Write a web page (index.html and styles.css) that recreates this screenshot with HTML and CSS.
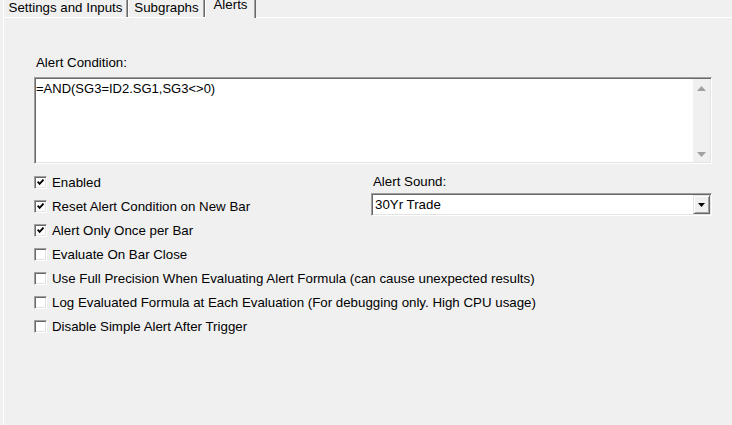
FILE: index.html
```html
<!DOCTYPE html>
<html lang="en">
<head>
	<meta charset="utf-8">
	<title>Alerts</title>
	<link rel="stylesheet" href="styles.css">
</head>
<body>
	<div class="tabs">
		<div class="tab tab-settings">Settings and Inputs</div>
		<div class="tab tab-subgraphs">Subgraphs</div>
		<div class="tab tab-alerts tab-selected">Alerts</div>
	</div>
	<div class="panel">
		<div class="field-label">Alert Condition:</div>
		<div class="memo">
			<div class="memo-text">=AND(SG3=ID2.SG1,SG3&lt;&gt;0)</div>
			<div class="memo-scroll">
				<svg class="arrow" width="9" height="5" viewBox="0 0 9 5"><polygon points="0,5 9,5 4.5,0"></polygon></svg>
				<svg class="arrow" width="9" height="5" viewBox="0 0 9 5"><polygon points="0,0 9,0 4.5,5"></polygon></svg>
			</div>
		</div>
		<div class="options">
			<div class="check">
				<span class="check-box"><svg width="7" height="7" viewBox="0 0 7 7"><path d="M0.6 2.6 L2.6 4.8 L6.5 0.6"></path></svg></span>
				<span>Enabled</span>
			</div>
			<div class="check">
				<span class="check-box"><svg width="7" height="7" viewBox="0 0 7 7"><path d="M0.6 2.6 L2.6 4.8 L6.5 0.6"></path></svg></span>
				<span>Reset Alert Condition on New Bar</span>
			</div>
			<div class="check">
				<span class="check-box"><svg width="7" height="7" viewBox="0 0 7 7"><path d="M0.6 2.6 L2.6 4.8 L6.5 0.6"></path></svg></span>
				<span>Alert Only Once per Bar</span>
			</div>
			<div class="check">
				<span class="check-box"></span>
				<span>Evaluate On Bar Close</span>
			</div>
			<div class="check">
				<span class="check-box"></span>
				<span>Use Full Precision When Evaluating Alert Formula (can cause unexpected results)</span>
			</div>
			<div class="check">
				<span class="check-box"></span>
				<span>Log Evaluated Formula at Each Evaluation (For debugging only. High CPU usage)</span>
			</div>
			<div class="check">
				<span class="check-box"></span>
				<span>Disable Simple Alert After Trigger</span>
			</div>
			<div class="sound">
				<div class="sound-label">Alert Sound:</div>
				<div class="combo">
					<div class="combo-text">30Yr Trade</div>
					<div class="combo-button">
						<svg width="7" height="4" viewBox="0 0 7 4"><polygon points="0,0 7,0 3.5,4"></polygon></svg>
					</div>
				</div>
			</div>
		</div>
	</div>
</body>
</html>
```

FILE: styles.css
```css
html, body {
	margin: 0;
	height: 100%;
	overflow: hidden;
}
body {
	background: #f0f0f0;
	font-family: "Liberation Sans", Arial, sans-serif;
	font-size: 13.3px;
	color: #000;
}
.tabs {
	display: flex;
	align-items: flex-end;
	height: 17px;
	padding-left: 3px;
}
.tab {
	box-sizing: border-box;
	height: 17px;
	border-left: 1px solid #fff;
	border-right: 1px solid #696969;
	box-shadow: inset -1px 0 #a0a0a0;
	text-align: center;
	line-height: 15px;
	white-space: nowrap;
}
.tab-settings {
	width: 125px;
}
.tab-subgraphs {
	width: 77px;
}
.tab-alerts {
	width: 51px;
}
.tab-selected {
	position: relative;
	z-index: 1;
	height: 20px;
	margin-bottom: -1px;
	background: #f0f0f0;
	line-height: 14px;
}
.panel {
	box-sizing: border-box;
	height: 408px;
	margin-left: 3px;
	border-left: 1px solid #fff;
	border-top: 1px solid #fff;
	padding: 37px 0 0 30px;
}
.field-label {
	line-height: 15px;
	padding-left: 2px;
}
.memo {
	box-sizing: border-box;
	display: flex;
	width: 678px;
	height: 87px;
	margin-top: 7px;
	background: #fff;
	border: 1px solid;
	border-color: #a0a0a0 #fff #fff #a0a0a0;
	box-shadow: inset 1px 1px #696969, inset -1px -1px #e3e3e3;
}
.memo-text {
	flex: 1;
	padding: 3px 0 0 1px;
	font-size: 13px;
	line-height: 15px;
}
.memo-scroll {
	display: flex;
	flex-direction: column;
	justify-content: space-between;
	align-items: center;
	width: 17px;
	margin: 1px 1px 1px 0;
	padding: 7px 0 5px;
	box-sizing: border-box;
	background: #f0f0f0;
}
.arrow polygon {
	fill: #a0a0a0;
}
.options {
	display: grid;
	grid-template-columns: 337px 341px;
	grid-auto-rows: 24px;
	margin-top: 6px;
}
.check {
	grid-column: 1;
	display: flex;
	align-items: center;
	gap: 5px;
	white-space: nowrap;
}
.check-box {
	box-sizing: border-box;
	display: flex;
	flex-shrink: 0;
	align-items: center;
	justify-content: center;
	width: 13px;
	height: 13px;
	background: #fff;
	border: 1px solid;
	border-color: #a0a0a0 #fff #fff #a0a0a0;
	box-shadow: inset 1px 1px #696969, inset -1px -1px #e3e3e3;
}
.check-box path {
	fill: none;
	stroke: #000;
	stroke-width: 1.8;
}
.sound {
	grid-column: 2;
	grid-row: 1 / span 2;
}
.sound-label {
	line-height: 23px;
	padding-left: 2px;
}
.combo {
	box-sizing: border-box;
	display: flex;
	width: 341px;
	height: 23px;
	background: #fff;
	border: 1px solid;
	border-color: #a0a0a0 #fff #fff #a0a0a0;
	box-shadow: inset 1px 1px #696969, inset -1px -1px #e3e3e3;
}
.combo-text {
	flex: 1;
	padding-left: 3px;
	line-height: 21px;
}
.combo-button {
	box-sizing: border-box;
	display: flex;
	align-items: center;
	justify-content: center;
	width: 17px;
	height: 19px;
	margin: 1px 1px 1px 0;
	background: #f0f0f0;
	border: 1px solid;
	border-color: #e3e3e3 #696969 #696969 #e3e3e3;
	box-shadow: inset 1px 1px #fff, inset -1px -1px #a0a0a0;
}
.combo-button polygon {
	fill: #000;
}
```
